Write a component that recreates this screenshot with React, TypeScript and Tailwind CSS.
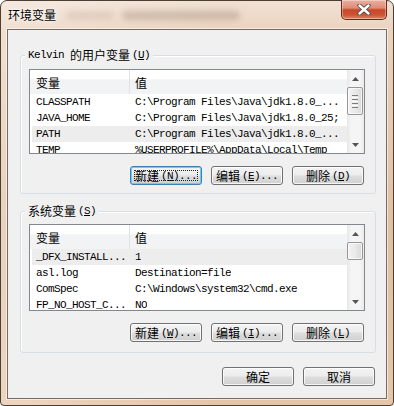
import React from "react";

const MONO = "font-['Liberation_Mono','Noto_Sans_CJK_SC',monospace] text-[11px] tracking-[-0.6px]";
const CJK = "font-['Noto_Sans_CJK_SC',sans-serif] text-[12px]";

type Row = [string, string];

const userRows: Row[] = [
  ["CLASSPATH", "C:\\Program Files\\Java\\jdk1.8.0_..."],
  ["JAVA_HOME", "C:\\Program Files\\Java\\jdk1.8.0_25;"],
  ["PATH", "C:\\Program Files\\Java\\jdk1.8.0_..."],
  ["TEMP", "%USERPROFILE%\\AppData\\Local\\Temp"],
];

const systemRows: Row[] = [
  ["_DFX_INSTALL...", "1"],
  ["asl.log", "Destination=file"],
  ["ComSpec", "C:\\Windows\\system32\\cmd.exe"],
  ["FP_NO_HOST_C...", "NO"],
];

// little label helper: CJK part + "(X)..." with underlined mnemonic
const Label = ({ cjk, mnemonic, dots }: { cjk: string; mnemonic?: string; dots?: boolean }) => (
  <span className="flex items-center whitespace-nowrap leading-[14px]">
    <span className={CJK}>{cjk}</span>
    {mnemonic && (
      <span className={`ml-[2px] ${MONO}`}>
        (<span className="underline underline-offset-[1px]">{mnemonic}</span>){dots ? "..." : ""}
      </span>
    )}
  </span>
);

const WinButton = ({ children, focused }: { children: React.ReactNode; focused?: boolean }) => (
  <div
    className={`relative flex h-[19px] w-[72px] items-center justify-center rounded-[3px] border bg-[linear-gradient(180deg,#f3f3f3_0%,#ececec_48%,#dedede_52%,#d0d0d0_100%)] text-black ${
      focused
        ? "border-[#3c7fb1] shadow-[inset_0_0_0_1px_#66cff7]"
        : "border-[#707070] shadow-[inset_0_0_0_1px_rgba(255,255,255,0.8)]"
    }`}
  >
    {children}
    {focused && <span className="absolute inset-[3px] border border-dotted border-[#222]" />}
  </div>
);

const Arrow = ({ up }: { up?: boolean }) => (
  <div className="flex h-[17px] w-full items-center justify-center">
    <svg width="7" height="4" viewBox="0 0 7 4">
      {up ? <polygon points="3.5,0 7,4 0,4" fill="#555" /> : <polygon points="0,0 7,0 3.5,4" fill="#555" />}
    </svg>
  </div>
);

const ScrollBar = ({ thumbHeight, grip }: { thumbHeight: number; grip?: boolean }) => (
  <div className="flex w-[17px] shrink-0 flex-col bg-[linear-gradient(90deg,#e7e7e7_0%,#f5f5f5_25%,#f5f5f5_75%,#ebebeb_100%)]">
    <Arrow up />
    <div
      className="mr-[1px] flex items-center justify-center rounded-[2px] border border-[#979797] bg-[linear-gradient(90deg,#f4f4f4_0%,#e9e9e9_50%,#d9d9d9_100%)] shadow-[inset_0_0_0_1px_rgba(255,255,255,0.7)]"
      style={{ height: thumbHeight }}
    >
      {grip && (
        <div className="flex flex-col gap-[1px]">
          <div className="h-[1px] w-[6px] bg-[#7d7d7d]" />
          <div className="h-[1px] w-[6px] bg-[#ffffff]" />
          <div className="h-[1px] w-[6px] bg-[#7d7d7d]" />
          <div className="h-[1px] w-[6px] bg-[#ffffff]" />
          <div className="h-[1px] w-[6px] bg-[#7d7d7d]" />
          <div className="h-[1px] w-[6px] bg-[#ffffff]" />
          <div className="h-[1px] w-[6px] bg-[#7d7d7d]" />
        </div>
      )}
    </div>
    <div className="flex-1" />
    <Arrow />
  </div>
);

const VarList = ({
  rows,
  selected,
  height,
  thumbHeight,
  grip,
}: {
  rows: Row[];
  selected: number;
  height: number;
  thumbHeight: number;
  grip?: boolean;
}) => (
  <div className="flex overflow-hidden border border-[#828790] bg-white" style={{ height }}>
    <div className="flex min-w-0 flex-1 flex-col overflow-hidden">
      {/* header */}
      <div className="flex h-[24px] shrink-0 bg-[linear-gradient(180deg,#ffffff_0%,#ffffff_38%,#f2f3f4_40%,#f2f3f4_100%)] text-black">
        <div className={`flex w-[100px] items-center border-r border-[#dfe3e8] pl-[6px] pt-[1px] ${CJK}`}>变量</div>
        <div className={`flex items-center pl-[5px] pt-[1px] ${CJK}`}>值</div>
      </div>
      {rows.map(([name, value], i) => (
        <div
          key={name}
          className={`flex h-[16px] shrink-0 border-l-2 border-white leading-[16px] text-black ${MONO} ${
            i === selected ? "bg-[#ededed]" : ""
          }`}
        >
          <div className="w-[98px] shrink-0 overflow-hidden whitespace-nowrap pl-[4px]">{name}</div>
          <div className="overflow-hidden whitespace-nowrap pl-[5px]">{value}</div>
        </div>
      ))}
    </div>
    <ScrollBar thumbHeight={thumbHeight} grip={grip} />
  </div>
);

const GroupBox = ({
  legend,
  children,
  className,
}: {
  legend: React.ReactNode;
  children: React.ReactNode;
  className?: string;
}) => (
  <div
    className={`flex flex-col rounded-[3px] border border-[#d5dfe5] pl-[8px] pr-[10px] shadow-[inset_1px_1px_0_#ffffff] ${className ?? ""}`}
  >
    <div className="-mt-[8px] ml-[-4px] flex h-[14px] self-start bg-[#f0f0f0] px-[3px] text-black">{legend}</div>
    {children}
  </div>
);

export default function App() {
  return (
    <div className="h-[406px] w-[394px] overflow-hidden bg-white">
      <div className="flex h-[406px] w-[394px] flex-col rounded-t-[7px] rounded-b-[4px] border border-[#4d3e34] bg-[linear-gradient(90deg,rgba(255,255,255,0.28)_0%,rgba(255,255,255,0)_55%),linear-gradient(180deg,#f1e1d3_0%,#ead2bd_8%,#e0c0a4_55%,#e6c6a9_100%)] px-[6px] pb-[6px]">
        {/* title bar */}
        <div className="flex h-[28px] shrink-0 items-start justify-between">
          <div className="flex items-start">
            <span
              className={`ml-[1px] mt-[6px] leading-[16px] text-black [text-shadow:0_0_6px_#fff,0_0_3px_#fff] ${CJK}`}
            >
              环境变量
            </span>
            <div className="ml-[10px] mt-[11px] h-[7px] w-[48px] rounded-full bg-[#b9a292] opacity-35 blur-[3px]" />
            <div className="ml-[8px] mt-[10px] h-[9px] w-[118px] rounded-full bg-[#9c8676] opacity-40 blur-[3px]" />
          </div>
          <div className="-mt-px flex h-[20px] w-[46px] items-center justify-center rounded-b-[5px] border border-t-0 border-[#6a2a1b] bg-[linear-gradient(180deg,#eab0a1_0%,#df8c76_42%,#c8472b_52%,#cd5535_80%,#e08767_100%)] shadow-[inset_0_0_0_1px_rgba(255,255,255,0.35)]">
            <svg width="14" height="11" viewBox="0 0 14 11">
              <path d="M2.5 1.5 L11.5 9.5 M11.5 1.5 L2.5 9.5" stroke="#4b4b4b" strokeWidth="4.2" strokeLinecap="round" />
              <path d="M2.5 1.5 L11.5 9.5 M11.5 1.5 L2.5 9.5" stroke="#ffffff" strokeWidth="2.4" strokeLinecap="round" />
            </svg>
          </div>
        </div>

        {/* client area */}
        <div className="flex flex-1 flex-col border border-[#766a62] bg-[#f0f0f0] shadow-[0_0_0_1px_rgba(255,255,255,0.55)]">
          {/* user variables */}
          <GroupBox
            className="ml-[12px] mr-[10px] mt-[25px] pb-[8px]"
            legend={
              <span className="flex items-center whitespace-nowrap leading-[14px]">
                <span className={MONO}>Kelvin&nbsp;</span>
                <span className={CJK}>的用户变量</span>
                <span className={`ml-[2px] ${MONO}`}>
                  (<span className="underline underline-offset-[1px]">U</span>)
                </span>
              </span>
            }
          >
            <div className="mt-[7px]">
              <VarList rows={userRows} selected={2} height={85} thumbHeight={28} grip />
            </div>
            <div className="mr-[1px] mt-[12px] flex justify-end gap-[9px]">
              <WinButton focused>
                <Label cjk="新建" mnemonic="N" dots />
              </WinButton>
              <WinButton>
                <Label cjk="编辑" mnemonic="E" dots />
              </WinButton>
              <WinButton>
                <Label cjk="删除" mnemonic="D" />
              </WinButton>
            </div>
          </GroupBox>

          {/* system variables */}
          <GroupBox
            className="ml-[12px] mr-[10px] mt-[17px] pb-[10px]"
            legend={<Label cjk="系统变量" mnemonic="S" />}
          >
            <div className="mt-[6px]">
              <VarList rows={systemRows} selected={0} height={87} thumbHeight={18} />
            </div>
            <div className="mr-[1px] mt-[12px] flex justify-end gap-[9px]">
              <WinButton>
                <Label cjk="新建" mnemonic="W" dots />
              </WinButton>
              <WinButton>
                <Label cjk="编辑" mnemonic="I" dots />
              </WinButton>
              <WinButton>
                <Label cjk="删除" mnemonic="L" />
              </WinButton>
            </div>
          </GroupBox>

          {/* OK / Cancel */}
          <div className="mr-[11px] mt-[14px] flex justify-end gap-[9px]">
            <WinButton>
              <Label cjk="确定" />
            </WinButton>
            <WinButton>
              <Label cjk="取消" />
            </WinButton>
          </div>
        </div>
      </div>
    </div>
  );
}
